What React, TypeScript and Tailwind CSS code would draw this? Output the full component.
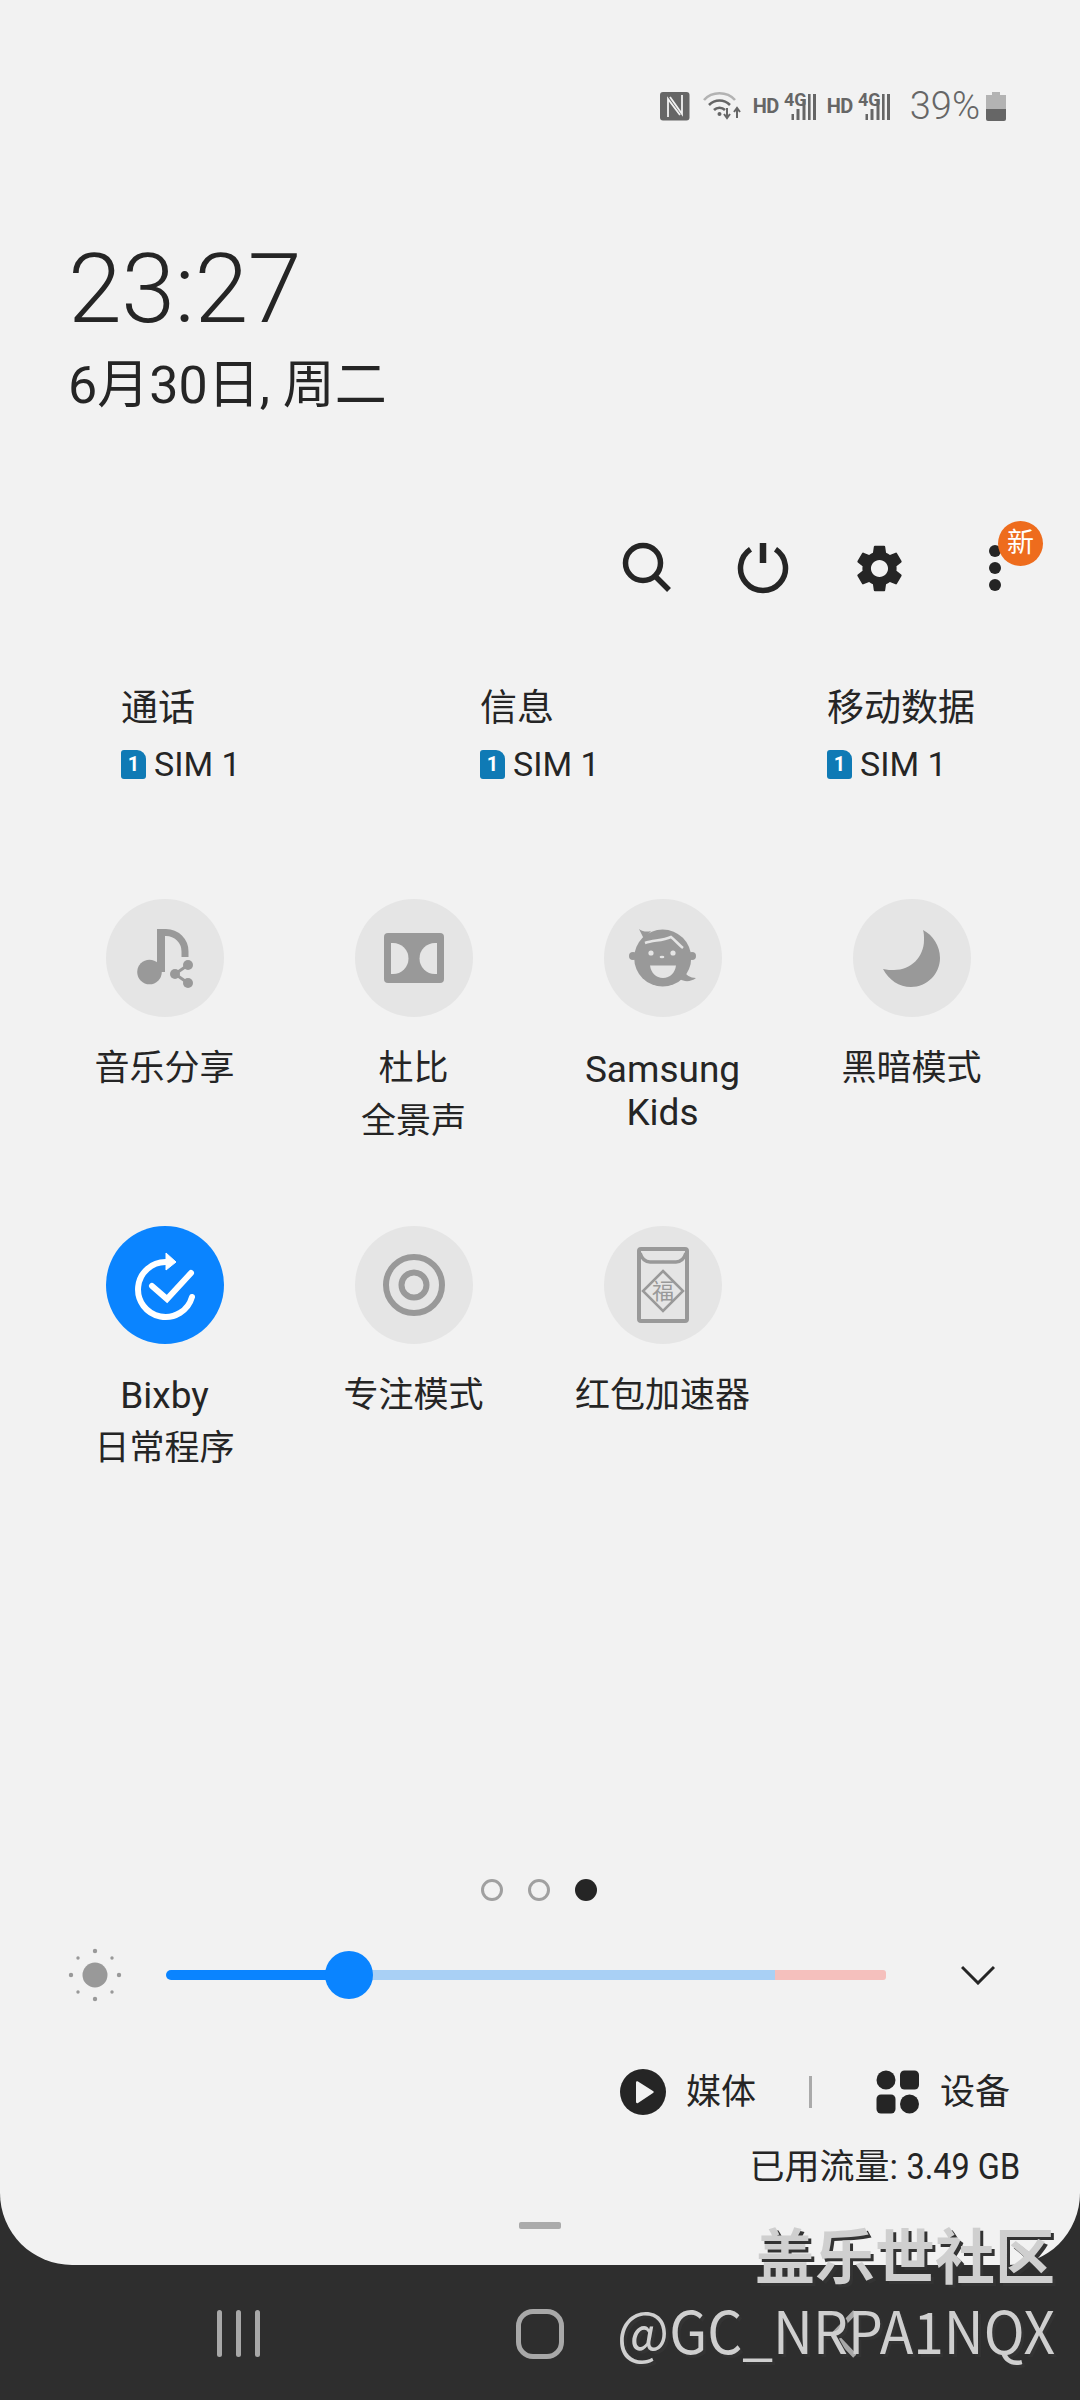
import { MdSettings } from 'react-icons/md';

const tiles = [
  { lines: ['音乐分享'], icon: <MusicShareIcon /> },
  { lines: ['杜比', '全景声'], icon: <DolbyIcon /> },
  { lines: ['Samsung', 'Kids'], icon: <KidsIcon />, latin: true },
  { lines: ['黑暗模式'], icon: <MoonIcon /> },
  { lines: ['Bixby', '日常程序'], icon: <BixbyIcon />, active: true },
  { lines: ['专注模式'], icon: <FocusIcon /> },
  { lines: ['红包加速器'], icon: <EnvelopeIcon /> },
];

function MusicShareIcon() {
  return (
    <svg width="118" height="118" viewBox="0 0 118 118" fill="#999999">
      <circle cx="43.5" cy="73" r="12.3" />
      <rect x="51" y="30" width="8" height="43" />
      <path d="M55 33.5H60A19 19 0 0 1 79 52.5V58" fill="none" stroke="#999999" strokeWidth="7" />
      <path d="M82 66L69 75L82 84" fill="none" stroke="#999999" strokeWidth="3" />
      <circle cx="82" cy="66" r="5" />
      <circle cx="69" cy="75" r="5" />
      <circle cx="82" cy="84" r="5" />
    </svg>
  );
}

function DolbyIcon() {
  return (
    <svg width="118" height="118" viewBox="0 0 118 118">
      <rect x="29" y="34" width="60" height="50" rx="4" fill="#999999" />
      <path d="M36 44H38A15.5 15.5 0 0 1 38 75H36Z" fill="#e5e5e5" />
      <path d="M82 44H80A15.5 15.5 0 0 0 80 75H82Z" fill="#e5e5e5" />
    </svg>
  );
}

function KidsIcon() {
  return (
    <svg width="118" height="118" viewBox="0 0 118 118">
      <circle cx="58.7" cy="59" r="28.5" fill="#999999" />
      <circle cx="29" cy="57" r="4" fill="#999999" />
      <circle cx="88" cy="57" r="4" fill="#999999" />
      <path d="M35 30C39 33 43 33 47 32L40 40Z" fill="#999999" />
      <path d="M80 72C82 76 86 79 92 79C87 83 80 83 76 80Z" fill="#999999" />
      <path d="M41 44C49 41 58 42 67 38C71 41 75 46 79 49" fill="none" stroke="#e5e5e5" strokeWidth="2.5" />
      <circle cx="47" cy="54" r="2.6" fill="#e5e5e5" />
      <circle cx="69" cy="54" r="2.6" fill="#e5e5e5" />
      <ellipse cx="58" cy="58" rx="2.4" ry="1.3" fill="#e5e5e5" />
      <path d="M46 66.5H72C71 74 66 79 59 79C52 79 47 74 46 66.5Z" fill="#e5e5e5" />
    </svg>
  );
}

function MoonIcon() {
  return (
    <svg width="118" height="118" viewBox="0 0 118 118">
      <path
        d="M70 31C80 36 87 47 87 59C87 75 74 88 58 88C46 88 36 81 30 70C34 71 38 71 41 71C58 71 71 58 71 41C71 37 71 34 70 31Z"
        fill="#999999"
      />
    </svg>
  );
}

function BixbyIcon() {
  return (
    <svg width="118" height="118" viewBox="0 0 118 118" fill="none" stroke="#ffffff" strokeWidth="6" strokeLinecap="round">
      <path d="M60 36A27.5 27.5 0 1 0 86 71" />
      <path d="M60 27L70 36L60 44Z" fill="#ffffff" strokeWidth="1" strokeLinecap="butt" />
      <path d="M46 60L61 73L85 47" />
    </svg>
  );
}

function FocusIcon() {
  return (
    <svg width="118" height="118" viewBox="0 0 118 118" fill="none" stroke="#999999" strokeWidth="6">
      <circle cx="59" cy="59" r="28" />
      <circle cx="59" cy="59" r="12.5" />
    </svg>
  );
}

function EnvelopeIcon() {
  return (
    <svg width="118" height="118" viewBox="0 0 118 118" fill="none" stroke="#999999">
      <rect x="35" y="23" width="48" height="72" rx="2" strokeWidth="4" />
      <path d="M36 27C38 33 41 36 46 36H72C77 36 80 33 82 27" strokeWidth="3.5" />
      <path d="M59 45L79 65L59 85L39 65Z" strokeWidth="2.5" />
      <text x="59" y="73" fontSize="22" textAnchor="middle" fill="#999999" stroke="none" fontFamily="'Noto Sans CJK SC', sans-serif">
        福
      </text>
    </svg>
  );
}

function NfcIcon() {
  return (
    <svg width="30" height="30" viewBox="0 0 30 30">
      <rect x="0" y="1" width="29.5" height="28.5" rx="3" fill="#666666" />
      <path d="M8 26V8L20 24M22 4V23L10 6" fill="none" stroke="#f2f2f2" strokeWidth="1.8" />
    </svg>
  );
}

function WifiIcon() {
  return (
    <svg width="38" height="30" viewBox="0 0 38 30" fill="none">
      <path d="M1 9C9 0 24 0 32 9" stroke="#b3b3b3" strokeWidth="2.6" />
      <path d="M6 14C12 8 21 8 27 14" stroke="#666666" strokeWidth="2.6" />
      <path d="M11 19C14 16 19 16 22 19" stroke="#666666" strokeWidth="2.6" />
      <circle cx="16.5" cy="23" r="2" fill="#666666" />
      <path d="M24 17V26M21 23L24 27L27 23" stroke="#666666" strokeWidth="2" />
      <path d="M34 27V18M31 21L34 17L37 21" stroke="#666666" strokeWidth="2" />
    </svg>
  );
}

function SignalIcon() {
  return (
    <svg width="33" height="36" viewBox="0 -3 33 36">
      <text x="0" y="15" fontSize="18" fontWeight="700" fill="#666666" fontFamily="Roboto, sans-serif">
        4G
      </text>
      <rect x="7.5" y="23" width="2.5" height="6" fill="#666666" />
      <rect x="12.5" y="18" width="3" height="11" fill="#666666" />
      <rect x="18.5" y="8" width="3" height="21" fill="#666666" />
      <rect x="24" y="3" width="2.6" height="26" fill="#666666" />
      <rect x="29" y="3" width="3" height="26" fill="#666666" />
    </svg>
  );
}

function BatteryIcon() {
  return (
    <svg width="20" height="30" viewBox="0 0 20 30">
      <path d="M6 1H14V4H20V18H0V4H6Z" fill="#b3b3b3" />
      <path d="M0 18H20V28A2 2 0 0 1 18 30H2A2 2 0 0 1 0 28Z" fill="#666666" />
    </svg>
  );
}

function SimIcon() {
  return (
    <div className="relative flex h-[29px] w-[25px] items-center justify-center rounded-[3px] rounded-tr-[9px] bg-[#0f7ab5] text-[20px] font-bold leading-none text-white">
      1
    </div>
  );
}

function SimBlock({ title, width }: { title: string; width: string }) {
  return (
    <div className={width}>
      <div className="text-[37px] leading-[50px]">{title}</div>
      <div className="mt-[8px] flex items-center gap-[8px] text-[34px] leading-[44px]">
        <SimIcon />
        <span>SIM 1</span>
      </div>
    </div>
  );
}

export default function App() {
  return (
    <div className="relative flex h-[2400px] w-[1080px] flex-col overflow-hidden bg-[#2e2e2e] font-['Roboto','Noto_Sans_CJK_SC',sans-serif] text-[#252525]">
      {/* Panel */}
      <div className="flex h-[2265px] flex-col rounded-b-[72px] bg-[#f2f2f2]">
        {/* Status bar */}
        <div className="mt-[91px] flex h-[30px] items-center justify-end pr-[74px] text-[#666666]">
          <NfcIcon />
          <div className="ml-[13px]">
            <WifiIcon />
          </div>
          <span className="ml-[12px] w-[23px] whitespace-nowrap text-[20px] font-bold tracking-[-0.5px]">HD</span>
          <div className="ml-[8px] flex items-end">
            <SignalIcon />
          </div>
          <span className="ml-[10px] w-[23px] whitespace-nowrap text-[20px] font-bold tracking-[-0.5px]">HD</span>
          <div className="ml-[8px] flex items-end">
            <SignalIcon />
          </div>
          <span className="ml-[19px] text-[38px] font-light leading-none">39%</span>
          <div className="ml-[6px]">
            <BatteryIcon />
          </div>
        </div>

        {/* Clock */}
        <div className="mt-[113px] pl-[68px]">
          <div className="text-[97px] font-light leading-[110px] tracking-[-0.5px]">23:27</div>
          <div className="mt-[12px] text-[52px] leading-[60px]">6月30日, 周二</div>
        </div>

        {/* Quick actions */}
        <div className="mt-[124px] flex h-[56px] justify-end pr-[27px]">
          <div className="flex w-[116px] items-center justify-center">
            <svg width="56" height="56" viewBox="0 0 56 56" fill="none" stroke="#252525" strokeWidth="5.5">
              <circle cx="24" cy="23" r="17.5" />
              <path d="M36 36L50 50" strokeWidth="5.5" />
            </svg>
          </div>
          <div className="flex w-[116px] items-center justify-center">
            <svg width="56" height="56" viewBox="0 0 56 56" fill="none" stroke="#252525" strokeWidth="5.5">
              <path d="M15.5 9.3A22.5 22.5 0 1 0 40.5 9.3" />
              <path d="M28 3V23" strokeWidth="6.5" />
            </svg>
          </div>
          <div className="flex w-[116px] items-center justify-center">
            <MdSettings size={57} color="#252525" />
          </div>
          <div className="relative flex w-[116px] flex-col items-center justify-center gap-[5px]">
            <span className="h-[12px] w-[12px] rounded-full bg-[#252525]" />
            <span className="h-[12px] w-[12px] rounded-full bg-[#252525]" />
            <span className="h-[12px] w-[12px] rounded-full bg-[#252525]" />
            <div className="absolute left-[61px] top-[-19px] flex h-[45px] w-[45px] items-center justify-center rounded-full bg-[#ee6c1d] text-[27px] leading-none text-white">
              新
            </div>
          </div>
        </div>

        {/* SIM preferences */}
        <div className="mt-[88px] flex pl-[121px]">
          <SimBlock title="通话" width="w-[359px]" />
          <SimBlock title="信息" width="w-[347px]" />
          <SimBlock title="移动数据" width="w-[200px]" />
        </div>

        {/* Tiles */}
        <div className="mt-[113px] ml-[40px] grid w-[996px] grid-cols-4 auto-rows-[327px]">
          {tiles.map((tile) => (
            <div key={tile.lines[0]} className="flex flex-col items-center">
              <div className={tile.active ? 'h-[118px] w-[118px] rounded-full bg-[#0a84ff]' : 'h-[118px] w-[118px] rounded-full bg-[#e5e5e5]'}>
                {tile.icon}
              </div>
              <div className={tile.latin ? 'mt-[31px] text-center text-[37px] leading-[43px]' : 'mt-[25px] text-center text-[35px] leading-[53px]'}>
                {tile.lines.map((line) => (
                  <div key={line} className={line === 'Bixby' ? 'text-[37px]' : ''}>
                    {line}
                  </div>
                ))}
              </div>
            </div>
          ))}
        </div>

        {/* Page dots */}
        <div className="mt-[326px] flex justify-center gap-[25px] pr-[3px]">
          <span className="h-[22px] w-[22px] rounded-full border-[3px] border-[#a0a0a0]" />
          <span className="h-[22px] w-[22px] rounded-full border-[3px] border-[#a0a0a0]" />
          <span className="h-[22px] w-[22px] rounded-full bg-[#252525]" />
        </div>

        {/* Brightness */}
        <div className="mt-[50px] flex h-[48px] items-center">
          <div className="ml-[65px] w-[60px]">
            <svg width="60" height="60" viewBox="0 0 60 60" fill="#999999">
              <circle cx="30" cy="30" r="12.5" />
              <circle cx="30" cy="6" r="2.2" />
              <circle cx="30" cy="54" r="2.2" />
              <circle cx="6" cy="30" r="2.2" />
              <circle cx="54" cy="30" r="2.2" />
              <circle cx="13" cy="13" r="1.7" />
              <circle cx="47" cy="13" r="1.7" />
              <circle cx="13" cy="47" r="1.7" />
              <circle cx="47" cy="47" r="1.7" />
            </svg>
          </div>
          <div className="relative ml-[41px] flex h-[10px] w-[720px]">
            <div className="w-[183px] rounded-l-[5px] bg-[#0a84ff]" />
            <div className="w-[426px] bg-[#a9d0f5]" />
            <div className="flex-1 rounded-r-[3px] bg-[#f5c0bd]" />
            <div className="absolute left-[159px] top-[-19px] h-[48px] w-[48px] rounded-full bg-[#0a84ff]" />
          </div>
          <div className="ml-[75px]">
            <svg width="34" height="20" viewBox="0 0 34 20" fill="none" stroke="#252525" strokeWidth="3">
              <path d="M1 2L17 18L33 2" />
            </svg>
          </div>
        </div>

        {/* Media and devices */}
        <div className="mt-[70px] flex h-[46px] items-center text-[35px] leading-none">
          <div className="ml-[620px]">
            <svg width="46" height="46" viewBox="0 0 46 46">
              <circle cx="23" cy="23" r="23" fill="#252525" />
              <path d="M16 13.5C16 12.5 17 12 18 12.5L33 22C34 22.6 34 23.4 33 24L18 34C17 34.5 16 34 16 33Z" fill="#f2f2f2" />
            </svg>
          </div>
          <span className="ml-[20px]">媒体</span>
          <div className="ml-[53px] h-[32px] w-[3px] bg-[#aaaaaa]" />
          <div className="ml-[64px]">
            <svg width="44" height="44" viewBox="0 0 44 44" fill="#252525">
              <circle cx="10" cy="10" r="9.5" />
              <rect x="24" y="0.5" width="19" height="19" rx="4.5" />
              <rect x="0.5" y="24.5" width="19" height="19" rx="4.5" />
              <circle cx="33.5" cy="34" r="9.5" />
            </svg>
          </div>
          <span className="ml-[20px]">设备</span>
        </div>

        {/* Data usage */}
        <div className="mt-[27px] flex h-[50px] items-center justify-end pr-[60px] text-[36px] leading-none">
          <span className="text-[35px]">已用流量:</span>
          <span className="ml-[-4px] inline-block origin-right scale-x-90">3.49 GB</span>
        </div>

        {/* Handle */}
        <div className="mx-auto mt-[30px] h-[7px] w-[42px] rounded-[2px] bg-[#ababab]" />
      </div>

      {/* Navigation bar */}
      <div className="flex flex-1 items-center pt-[2px]">
        <div className="ml-[217px] flex h-[47px] w-[43px] justify-between">
          <span className="w-[5px] rounded-full bg-[#a8a8a8]" />
          <span className="w-[5px] rounded-full bg-[#a8a8a8]" />
          <span className="w-[5px] rounded-full bg-[#a8a8a8]" />
        </div>
        <div className="ml-[256px] h-[50px] w-[48px] rounded-[17px] border-[5px] border-[#a8a8a8]" />
        <div className="ml-[266px]">
          <svg width="28" height="48" viewBox="0 0 28 48" fill="none" stroke="#a8a8a8" strokeWidth="5">
            <path d="M25 2L4 24L25 46" />
          </svg>
        </div>
      </div>

      {/* Watermark */}
      <div className="absolute right-[25px] top-[2215px] text-right font-['Noto_Sans_CJK_SC',sans-serif] text-[#cfcfcf] [text-shadow:3px_3px_0_#333333]">
        <div className="text-[60px] font-bold leading-[76px]">盖乐世社区</div>
        <div className="origin-right scale-x-[0.95] text-[58px] leading-[76px]">@GC_NRPA1NQX</div>
      </div>
    </div>
  );
}
